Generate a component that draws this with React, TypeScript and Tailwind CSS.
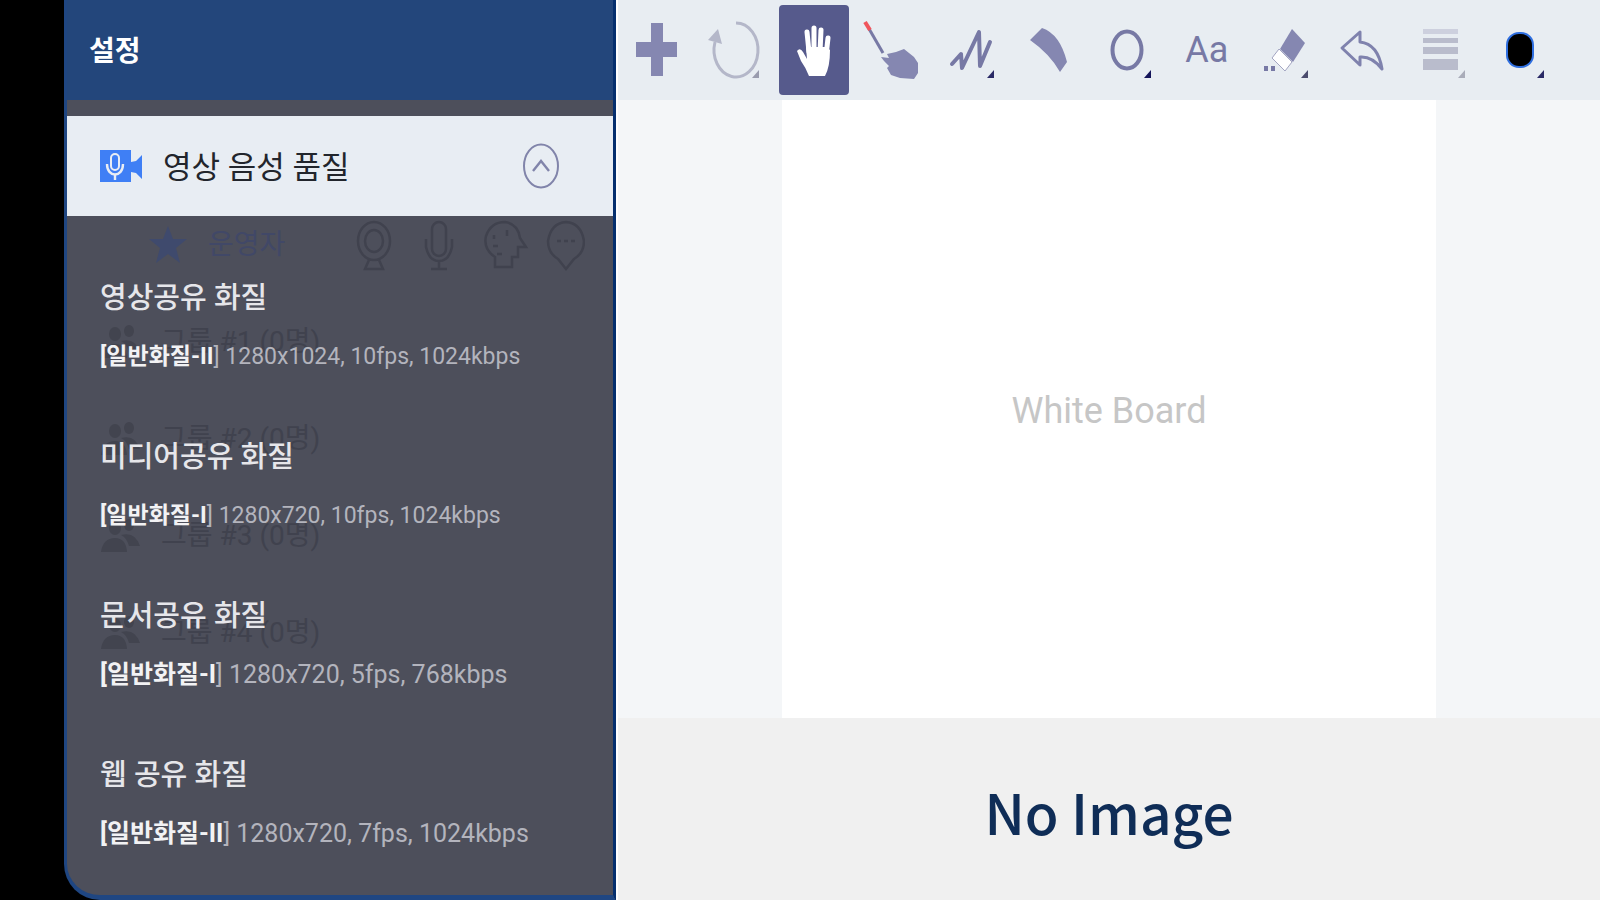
import type { ReactNode } from "react";

type Quality = { title: string; grade: string; detail: string; large?: boolean };

const QUALITIES: Quality[] = [
  { title: "영상공유 화질", grade: "[일반화질-II", detail: "1280x1024, 10fps, 1024kbps" },
  { title: "미디어공유 화질", grade: "[일반화질-I", detail: "1280x720, 10fps, 1024kbps" },
  { title: "문서공유 화질", grade: "[일반화질-I", detail: "1280x720, 5fps, 768kbps", large: true },
  { title: "웹 공유 화질", grade: "[일반화질-II", detail: "1280x720, 7fps, 1024kbps", large: true },
];

const GROUPS = ["그룹 #1 (0명)", "그룹 #2 (0명)", "그룹 #3 (0명)", "그룹 #4 (0명)"];

function ToolIcon({ children }: { children: ReactNode }) {
  return (
    <svg viewBox="0 0 64 64" className="h-16 w-16 shrink-0" fill="none" aria-hidden="true">
      {children}
    </svg>
  );
}

// small triangle marking tools that open a submenu
function Corner({ color = "#2a2a66" }: { color?: string }) {
  return <path d="M55 52v8h-7z" fill={color} />;
}

const TOOLS: { label: string; active?: boolean; icon: ReactNode }[] = [
  {
    label: "추가",
    icon: (
      <ToolIcon>
        <path d="M26 5h12v19h14v15H38v19H26V39H11V24h15z" fill="#8587b1" />
      </ToolIcon>
    ),
  },
  {
    label: "회전",
    icon: (
      <ToolIcon>
        <path d="M32 5A22 27 0 1 1 11 24" stroke="#b4b7c9" strokeWidth="3" />
        <path d="M14 11L4 22l14 4z" fill="#b4b7c9" />
        <Corner color="#9a9cae" />
      </ToolIcon>
    ),
  },
  {
    label: "이동",
    active: true,
    icon: (
      <ToolIcon>
        <g stroke="#fff" strokeWidth="5" strokeLinecap="round">
          <path d="M25 14l2 20M32 10v22M39 12l-1 22M46 20l-2 18" />
        </g>
        <path d="M24 29h20l4 3q0 17-5 26H27q-3-8-8-15l-4-10q3-4 6 1l4 7z" fill="#fff" />
      </ToolIcon>
    ),
  },
  {
    label: "포인터",
    icon: (
      <ToolIcon>
        <path d="M7 9l15 26" stroke="#7779a5" strokeWidth="3" />
        <path d="M4 4l5 8" stroke="#f0555c" strokeWidth="4" />
        <path d="M20 39l8 1-2-4 9-2 8-3 10 8 4 6v10l-4 6-14-1-9-3-4-7 2-2-5-5z" fill="#8587b1" />
      </ToolIcon>
    ),
  },
  {
    label: "펜",
    icon: (
      <ToolIcon>
        <path
          d="M13 46L22 36l1 14L40 14l1 34L51 24"
          stroke="#7779a5"
          strokeWidth="4"
          strokeLinecap="round"
          strokeLinejoin="round"
        />
        <Corner />
      </ToolIcon>
    ),
  },
  {
    label: "형광펜",
    icon: (
      <ToolIcon>
        <path d="M12 22L24 10q18 6 25 34l-7 10Q32 36 12 22z" fill="#8587b1" />
      </ToolIcon>
    ),
  },
  {
    label: "도형",
    icon: (
      <ToolIcon>
        <ellipse cx="31" cy="32" rx="14.5" ry="18.5" stroke="#7779a5" strokeWidth="4" />
        <Corner color="#14145a" />
      </ToolIcon>
    ),
  },
  {
    label: "텍스트",
    icon: <span className="text-[36px] leading-none text-[#7779a5]">Aa</span>,
  },
  {
    label: "지우개",
    icon: (
      <ToolIcon>
        <path d="M39 11l13 14-12 19-13-13z" fill="#8587b1" />
        <path d="M26 31l13 13-7 9-13-13z" fill="#fff" stroke="#a3a5c2" />
        <path d="M11 48h4v5h-4zM18 48h4v5h-4z" fill="#7779a5" />
        <Corner color="#4b4c6e" />
      </ToolIcon>
    ),
  },
  {
    label: "실행 취소",
    icon: (
      <ToolIcon>
        <path
          d="M10 30l18-16v10q18 2 22 27-10-13-22-12v8z"
          stroke="#7f82ad"
          strokeWidth="3"
          strokeLinejoin="round"
        />
      </ToolIcon>
    ),
  },
  {
    label: "선 굵기",
    icon: (
      <ToolIcon>
        <path d="M13 11h35v5H13z" fill="#cdd0de" />
        <path d="M13 20h35v5H13zM13 29h35v7H13zM13 41h35v11H13z" fill="#b9bccc" />
        <Corner color="#a9acb9" />
      </ToolIcon>
    ),
  },
  {
    label: "색상",
    icon: (
      <ToolIcon>
        <rect x="18" y="15" width="26" height="34" rx="12" fill="#000" stroke="#2f6fe0" strokeWidth="2" />
        <Corner />
      </ToolIcon>
    ),
  },
];

function VideoMicIcon() {
  return (
    <svg viewBox="0 0 44 34" className="h-[34px] w-11 shrink-0" aria-hidden="true">
      <path d="M1 1h31v12l5-1 6-6v24l-6-6-5-1v10H1z" fill="#3f7ff5" />
      <rect x="12" y="5" width="8" height="16" rx="4" fill="#3f7ff5" stroke="#e8edf4" strokeWidth="2" />
      <path d="M8 15c0 14 16 14 16 0M16 25v6" fill="none" stroke="#e8edf4" strokeWidth="2.4" />
    </svg>
  );
}

function PeopleIcon() {
  return (
    <svg viewBox="0 0 40 40" className="h-10 w-10 shrink-0" fill="#42444f" aria-hidden="true">
      <ellipse cx="14" cy="12" rx="6" ry="7" />
      <ellipse cx="28" cy="9" rx="5" ry="6" />
      <path d="M0 36q2-14 14-14 11 0 12 14zM20 19q14-4 19 11H28q-2-8-8-11z" />
    </svg>
  );
}

// participant list that shows faintly through the settings sheet
function Participants() {
  return (
    <div className="absolute inset-0 text-[#40424e]" aria-hidden="true">
      <div className="flex h-[77px] items-center pr-7 pl-[81px] pb-5">
        <svg viewBox="0 0 40 40" className="h-10 w-10 shrink-0" fill="#3f4a6d">
          <path d="M20 1l5 13h14L28 23l4 15-12-9-12 9 4-15L1 14h14z" />
        </svg>
        <span className="pl-5 text-[28px] leading-10 text-[#414867]">운영자</span>
        <svg
          viewBox="0 0 232 52"
          className="ml-auto h-[52px] w-[232px] shrink-0"
          fill="none"
          stroke="#40424e"
          strokeWidth="2.5"
        >
          <ellipse cx="21" cy="22" rx="16" ry="19" />
          <ellipse cx="21" cy="22" rx="9" ry="11" />
          <path d="M16 41l-4 9h18l-4-9" />
          <rect x="79" y="3" width="14" height="34" rx="7" />
          <path d="M73 20v8q3 14 13 14t13-14v-8M86 42v8M78 50h16" />
          <path d="M142 48V38q-12-8-9-21 5-14 19-14 13 2 15 16l6 9h-8v10h-6v10z" />
          <path d="M141 16v4M154 11v6M140 27h5M144 35h5" />
          <path d="M213 50l-8-10q-10-6-10-18 3-18 18-19 15 1 18 19 0 12-10 18z" />
          <path d="M204 22h4M211 22h4M218 22h4" />
        </svg>
      </div>
      <ul>
        {GROUPS.map((group) => (
          <li key={group} className="flex h-[97px] items-center gap-5 pl-[34px]">
            <PeopleIcon />
            <span className="text-[28px] leading-10">{group}</span>
          </li>
        ))}
      </ul>
    </div>
  );
}

function SettingsPanel() {
  return (
    <aside className="flex w-[38.5%] shrink-0 bg-black pl-16">
      <div className="flex min-w-0 flex-1 flex-col overflow-hidden rounded-bl-[36px] border-x-[3px] border-b-[5px] border-[#1f4682] border-r-[#052f6e] bg-[#4d4f5b]">
        <header className="flex h-[100px] shrink-0 items-center bg-[#23467b] px-[22px] pt-1">
          <h1 className="text-[28px] leading-10 font-bold text-white">설정</h1>
        </header>

        <button
          type="button"
          aria-expanded="true"
          className="mt-4 flex h-[100px] shrink-0 items-center bg-[#e8edf3] pr-[54px] pl-8 text-left"
        >
          <VideoMicIcon />
          <span className="pt-1 pl-5 text-[31px] leading-10 text-[#22252c]">영상 음성 품질</span>
          <svg viewBox="0 0 36 46" className="ml-auto h-[46px] w-9 shrink-0" fill="none" stroke="#8184aa" aria-hidden="true">
            <ellipse cx="18" cy="23" rx="17" ry="21.5" strokeWidth="2" />
            <path d="M10 28l8-10 8 10" strokeWidth="2.4" />
          </svg>
        </button>

        <div className="relative flex-1">
          <Participants />
          <ul className="relative flex flex-col gap-[60px] px-[33px] pt-[62px] pb-8">
            {QUALITIES.map((q) => (
              <li key={q.title} className="flex flex-col gap-[19px] whitespace-nowrap">
                <h2 className="text-[29px] leading-10 font-medium text-[#e6e6ea]">{q.title}</h2>
                <p
                  className={
                    q.large
                      ? "text-[25px] leading-10 text-[#b3b4bd]"
                      : "text-[23px] leading-10 text-[#b3b4bd]"
                  }
                >
                  <strong className="font-bold text-[#f2f2f4]">{q.grade}</strong>] {q.detail}
                </p>
              </li>
            ))}
          </ul>
        </div>
      </div>
    </aside>
  );
}

export default function App() {
  return (
    <div className="flex min-h-screen bg-white font-['Roboto','Noto_Sans_CJK_KR',sans-serif]">
      <SettingsPanel />

      <main className="flex min-w-0 flex-1 flex-col pl-0.5">
        <div role="toolbar" className="grid h-[100px] shrink-0 grid-cols-12 bg-[#e8edf2] pr-10">
          {TOOLS.map((tool) => (
            <button
              key={tool.label}
              type="button"
              aria-label={tool.label}
              aria-pressed={tool.active ? true : undefined}
              className={
                tool.active
                  ? "flex h-[90px] w-[70px] items-center justify-center place-self-center rounded bg-[#565a8c]"
                  : "flex items-center justify-center"
              }
            >
              {tool.icon}
            </button>
          ))}
        </div>

        <section className="flex flex-1 justify-center bg-[#f4f6f8]">
          <div className="flex w-2/3 items-center justify-center bg-white pt-1">
            <p className="text-[36px] leading-12 text-[#c6c6c6]">White Board</p>
          </div>
        </section>

        <section className="flex h-[182px] shrink-0 items-center justify-center bg-[#f0f0f0] pt-1">
          <p className="font-['Noto_Sans_CJK_KR',sans-serif] text-[55px] leading-none font-medium text-[#0f2d57]">
            No Image
          </p>
        </section>
      </main>
    </div>
  );
}
